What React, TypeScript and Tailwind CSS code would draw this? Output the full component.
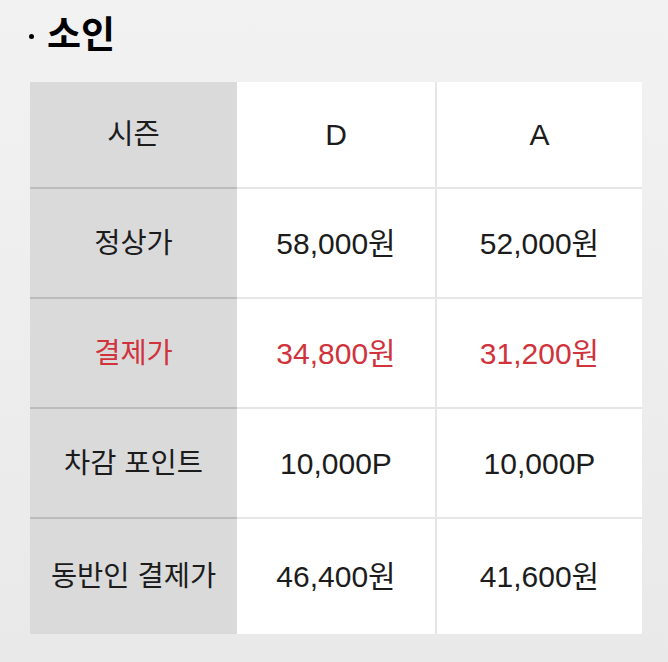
const FONT = { fontFamily: '"Liberation Sans", "Noto Sans CJK KR", sans-serif' };

type Row = { label: string; d: string; a: string; h: string; red?: boolean };

const ROWS: Row[] = [
  { label: "시즌", d: "D", a: "A", h: "h-[105px]" },
  { label: "정상가", d: "58,000원", a: "52,000원", h: "h-[108px]" },
  { label: "결제가", d: "34,800원", a: "31,200원", h: "h-[108px]", red: true },
  { label: "차감 포인트", d: "10,000P", a: "10,000P", h: "h-[108px]" },
  { label: "동반인 결제가", d: "46,400원", a: "41,600원", h: "h-[115px]" },
];

export default function App() {
  return (
    <div
      className="min-h-[662px] w-[668px] bg-gradient-to-b from-[#f3f2f3] to-[#e9e9e9] pt-[14px]"
      style={FONT}
    >
      <h2 className="flex items-center pl-[29px] text-[37px] font-bold leading-[44px] text-black">
        <span className="mr-[13px] h-[5px] w-[5px] rounded-full bg-black" />
        소인
      </h2>

      <div className="ml-[30px] mt-[24px] w-[612px]">
        {ROWS.map((r, i) => (
          <div key={r.label}>
            {i > 0 && (
              <div className="flex h-[2px]">
                <div className="w-[207px] bg-[#bcbcbd]" />
                <div className="flex-1 bg-[#e6e6e6]" />
              </div>
            )}
            <div className={`flex ${r.h} text-[30px] ${r.red ? "text-[#d0333b]" : "text-[#1c1c1c]"}`}>
              <div className="flex w-[207px] items-center justify-center bg-[#dadadb] text-[28.5px]">{r.label}</div>
              <div className="flex w-[198px] items-center justify-center bg-white">{r.d}</div>
              <div className="w-[2px] bg-[#e6e6e6]" />
              <div className="flex flex-1 items-center justify-center bg-white">{r.a}</div>
            </div>
          </div>
        ))}
      </div>
    </div>
  );
}
